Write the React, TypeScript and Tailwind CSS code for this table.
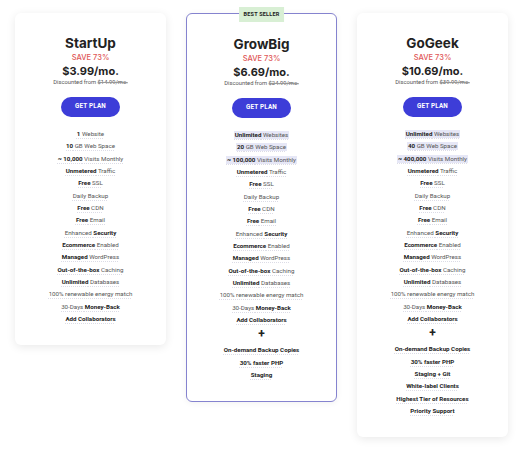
type Seg = [string, boolean];

interface Feature {
  parts: Seg[];
  hl?: boolean;
}

interface Plan {
  name: string;
  price: string;
  was: string;
  features: Feature[];
  extras: Feature[];
  best?: boolean;
}

const f = (parts: Seg[], hl = false): Feature => ({ parts, hl });

const common: Feature[] = [
  f([["Unmetered", true], [" Traffic", false]]),
  f([["Free", true], [" SSL", false]]),
  f([["Daily Backup", false]]),
  f([["Free", true], [" CDN", false]]),
  f([["Free", true], [" Email", false]]),
  f([["Enhanced ", false], ["Security", true]]),
  f([["Ecommerce", true], [" Enabled", false]]),
  f([["Managed", true], [" WordPress", false]]),
  f([["Out-of-the-box", true], [" Caching", false]]),
  f([["Unlimited", true], [" Databases", false]]),
  f([["100% renewable energy match", false]]),
  f([["30-Days ", false], ["Money-Back", true]]),
  f([["Add Collaborators", true]]),
];

const plans: Plan[] = [
  {
    name: "StartUp",
    price: "$3.99/mo.",
    was: "$14.99/mo.",
    features: [
      f([["1", true], [" Website", false]]),
      f([["10", true], [" GB Web Space", false]]),
      f([["~ 10,000", true], [" Visits Monthly", false]]),
      ...common,
    ],
    extras: [],
  },
  {
    name: "GrowBig",
    price: "$6.69/mo.",
    was: "$24.99/mo.",
    best: true,
    features: [
      f([["Unlimited", true], [" Websites", false]], true),
      f([["20", true], [" GB Web Space", false]], true),
      f([["~ 100,000", true], [" Visits Monthly", false]], true),
      ...common,
    ],
    extras: [
      f([["On-demand Backup Copies", true]]),
      f([["30% faster PHP", true]]),
      f([["Staging", true]]),
    ],
  },
  {
    name: "GoGeek",
    price: "$10.69/mo.",
    was: "$39.99/mo.",
    features: [
      f([["Unlimited", true], [" Websites", false]], true),
      f([["40", true], [" GB Web Space", false]], true),
      f([["~ 400,000", true], [" Visits Monthly", false]], true),
      ...common,
    ],
    extras: [
      f([["On-demand Backup Copies", true]]),
      f([["30% faster PHP", true]]),
      f([["Staging + Git", true]]),
      f([["White-label Clients", true]]),
      f([["Highest Tier of Resources", true]]),
      f([["Priority Support", true]]),
    ],
  },
];

function FeatureRow({ item }: { item: Feature }) {
  return (
    <li className="h-[12.33px] leading-[12.33px] text-center whitespace-nowrap">
      <span
        className={
          "px-[1px] underline decoration-dotted decoration-[#dcdce6] underline-offset-[1.5px] " +
          (item.hl ? "bg-[#e6e7f6]" : "")
        }
      >
        {item.parts.map(([t, b], i) => (
          <span key={i} className={b ? "font-bold text-[#1c1c1c]" : "text-[#555]"}>
            {t}
          </span>
        ))}
      </span>
    </li>
  );
}

function PlanCard({ plan }: { plan: Plan }) {
  return (
    <div
      className={
        "relative w-[151px] bg-white rounded-[6px] flex flex-col items-center pt-[22px] pb-[20px] " +
        (plan.best
          ? "border border-[#8583cf] shadow-[0_1px_6px_rgba(0,0,0,0.06)]"
          : "shadow-[0_2px_10px_rgba(0,0,0,0.09)]")
      }
    >
      {plan.best && (
        <div className="absolute top-[-7px] left-1/2 -translate-x-1/2 bg-[#d8efd4] px-[5px] h-[15px] leading-[15px] text-[5.5px] font-bold text-[#222] tracking-[0.2px]">
          BEST SELLER
        </div>
      )}
      <h2 className="text-[13.5px] leading-[16px] font-bold text-[#222] font-['Inter',sans-serif]">
        {plan.name}
      </h2>
      <div className="mt-[2px] text-[7.5px] leading-[10px] text-[#e05757] font-medium font-['Inter',sans-serif]">
        SAVE 73%
      </div>
      <div className="mt-[2px] text-[11px] leading-[13px] font-bold text-[#222] font-['Inter',sans-serif]">
        {plan.price}
      </div>
      <div className="text-[5.8px] leading-[8px] text-[#555]">
        Discounted from <span className="line-through decoration-[#999]">{plan.was}</span>
      </div>
      <button className="mt-[11px] w-[59px] h-[20px] rounded-full bg-[#3d3dd8] text-white text-[6.3px] font-bold tracking-[0.2px]">
        GET PLAN
      </button>
      <ul className="mt-[11px] text-[6.2px] w-full">
        {plan.features.map((it, i) => (
          <FeatureRow key={i} item={it} />
        ))}
      </ul>
      {plan.extras.length > 0 && (
        <>
          <div className="h-[18px] leading-[16px] text-[12px] font-bold text-[#222] text-center">+</div>
          <ul className="text-[6.2px] w-full">
            {plan.extras.map((it, i) => (
              <FeatureRow key={i} item={it} />
            ))}
          </ul>
        </>
      )}
    </div>
  );
}

export default function App() {
  return (
    <div className="w-[520px] h-[450px] bg-white font-['Roboto',sans-serif] pt-[13px] pl-[15px] flex items-start gap-[20px]">
      {plans.map((p) => (
        <PlanCard key={p.name} plan={p} />
      ))}
    </div>
  );
}
